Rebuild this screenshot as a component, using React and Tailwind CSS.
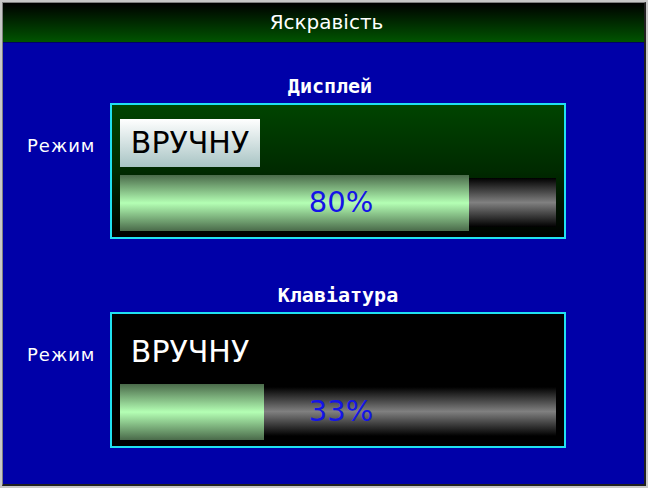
import React from "react";

const Bar = ({ value }) => (
  <div className="relative h-[56px] w-[436px]">
    <div className="absolute left-0 top-[3px] h-[49px] w-full bg-[linear-gradient(to_bottom,#000000,#808080_50%,#000000)]" />
    <div
      className="absolute left-0 top-0 h-full bg-[linear-gradient(to_bottom,#4a6a4a,#b4ffb4_50%,#4a6a4a)]"
      style={{ width: `${value}%` }}
    />
    <div className="absolute inset-0 flex items-center justify-center pb-[2px] pl-[6px] text-[29px] leading-none text-[#1414e6] font-['DejaVu_Sans',sans-serif]">
      {value}%
    </div>
  </div>
);

const Section = ({ title, titleClass, mode, value, selected, boxClass }) => (
  <div className="flex flex-col">
    <div className={`ml-[107px] w-[456px] text-center font-['DejaVu_Sans_Mono',monospace] font-bold text-[20px] leading-none text-white ${titleClass}`}>
      {title}
    </div>
    <div className="mt-[7px] flex items-start">
      <div className="w-[107px] pl-[24px] pt-[34px] font-['DejaVu_Sans',sans-serif] text-[18px] tracking-[1px] leading-none text-white">
        Режим
      </div>
      <div className={`h-[136px] w-[456px] border-2 border-[#20e0f0] pl-[8px] pt-[14px] ${boxClass}`}>
        <div
          className={`flex h-[48px] w-[140px] items-center justify-center font-['DejaVu_Sans',sans-serif] text-[30px] leading-none ${
            selected
              ? "bg-[linear-gradient(to_bottom,#ffffff,#a8c4c4)] text-black"
              : "text-white"
          }`}
        >
          {mode}
        </div>
        <div className="mt-[8px]">
          <Bar value={value} />
        </div>
      </div>
    </div>
  </div>
);

export default function App() {
  return (
    <div className="h-[488px] w-[648px] border-2 border-[#c8c8c8] bg-[#c8c8c8]">
      <div className="flex h-full w-full flex-col border-l border-t border-l-[#808080] border-t-[#808080] border-r-2 border-b-2 border-r-[#202020] border-b-[#202020] bg-[#0000a8]">
        <div className="flex h-[40px] items-center justify-center border-b border-[#00006a] bg-[linear-gradient(to_bottom,#000000,#005400)] pl-[6px] pb-[2px] font-['DejaVu_Sans',sans-serif] text-[20px] text-white">
          Яскравість
        </div>
        <div className="flex flex-col gap-[46px] pt-[33px]">
          <Section
            title="Дисплей"
            titleClass="pr-[16px]"
            mode="ВРУЧНУ"
            value={80}
            selected
            boxClass="bg-[linear-gradient(to_bottom,#004400,#002a00_50%,#000000)]"
          />
          <Section
            title="Клавіатура"
            titleClass=""
            mode="ВРУЧНУ"
            value={33}
            selected={false}
            boxClass="bg-black"
          />
        </div>
      </div>
    </div>
  );
}
